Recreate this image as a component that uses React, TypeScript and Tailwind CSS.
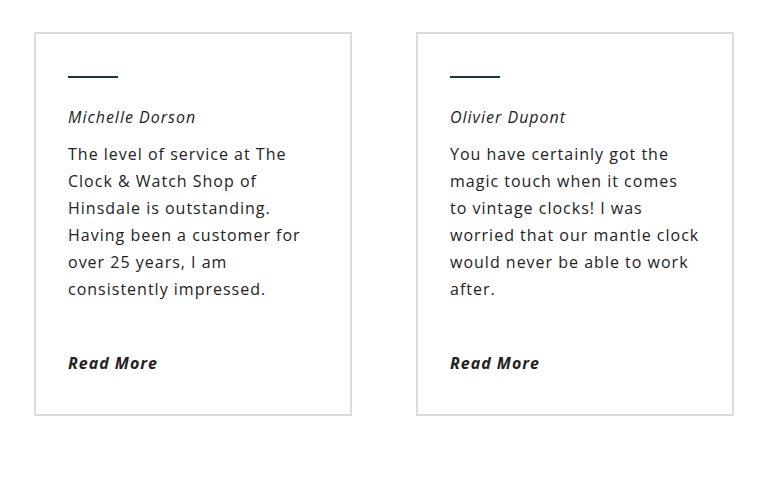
const testimonials = [
  {
    name: "Michelle Dorson",
    text: "The level of service at The Clock & Watch Shop of Hinsdale is outstanding. Having been a customer for over 25 years, I am consistently impressed.",
  },
  {
    name: "Olivier Dupont",
    text: "You have certainly got the magic touch when it comes to vintage clocks! I was worried that our mantle clock would never be able to work after.",
  },
];

function TestimonialCard({ name, text }: { name: string; text: string }) {
  return (
    <div className="flex h-[384px] w-[318px] flex-col border-2 border-[#dcdcdc] bg-white px-8 pt-[42px]">
      <div className="h-[2px] w-[50px] bg-[#1d3441]" />
      <p className="mt-[26px] text-[16px] italic leading-[27px] tracking-[1px] text-[#222]">{name}</p>
      <p className="mt-[10px] text-[16px] leading-[27px] tracking-[1px] text-[#222]">{text}</p>
      <a href="#" className="mt-auto mb-[37px] text-[16px] font-bold italic leading-[27px] tracking-[1px] text-[#222]">
        Read More
      </a>
    </div>
  );
}

export default function App() {
  return (
    <div className="h-[480px] w-[768px] bg-white pl-[34px] pt-[32px]" style={{ fontFamily: '"Open Sans", sans-serif' }}>
      <div className="flex gap-16">
        {testimonials.map((t) => (
          <TestimonialCard key={t.name} name={t.name} text={t.text} />
        ))}
      </div>
    </div>
  );
}
